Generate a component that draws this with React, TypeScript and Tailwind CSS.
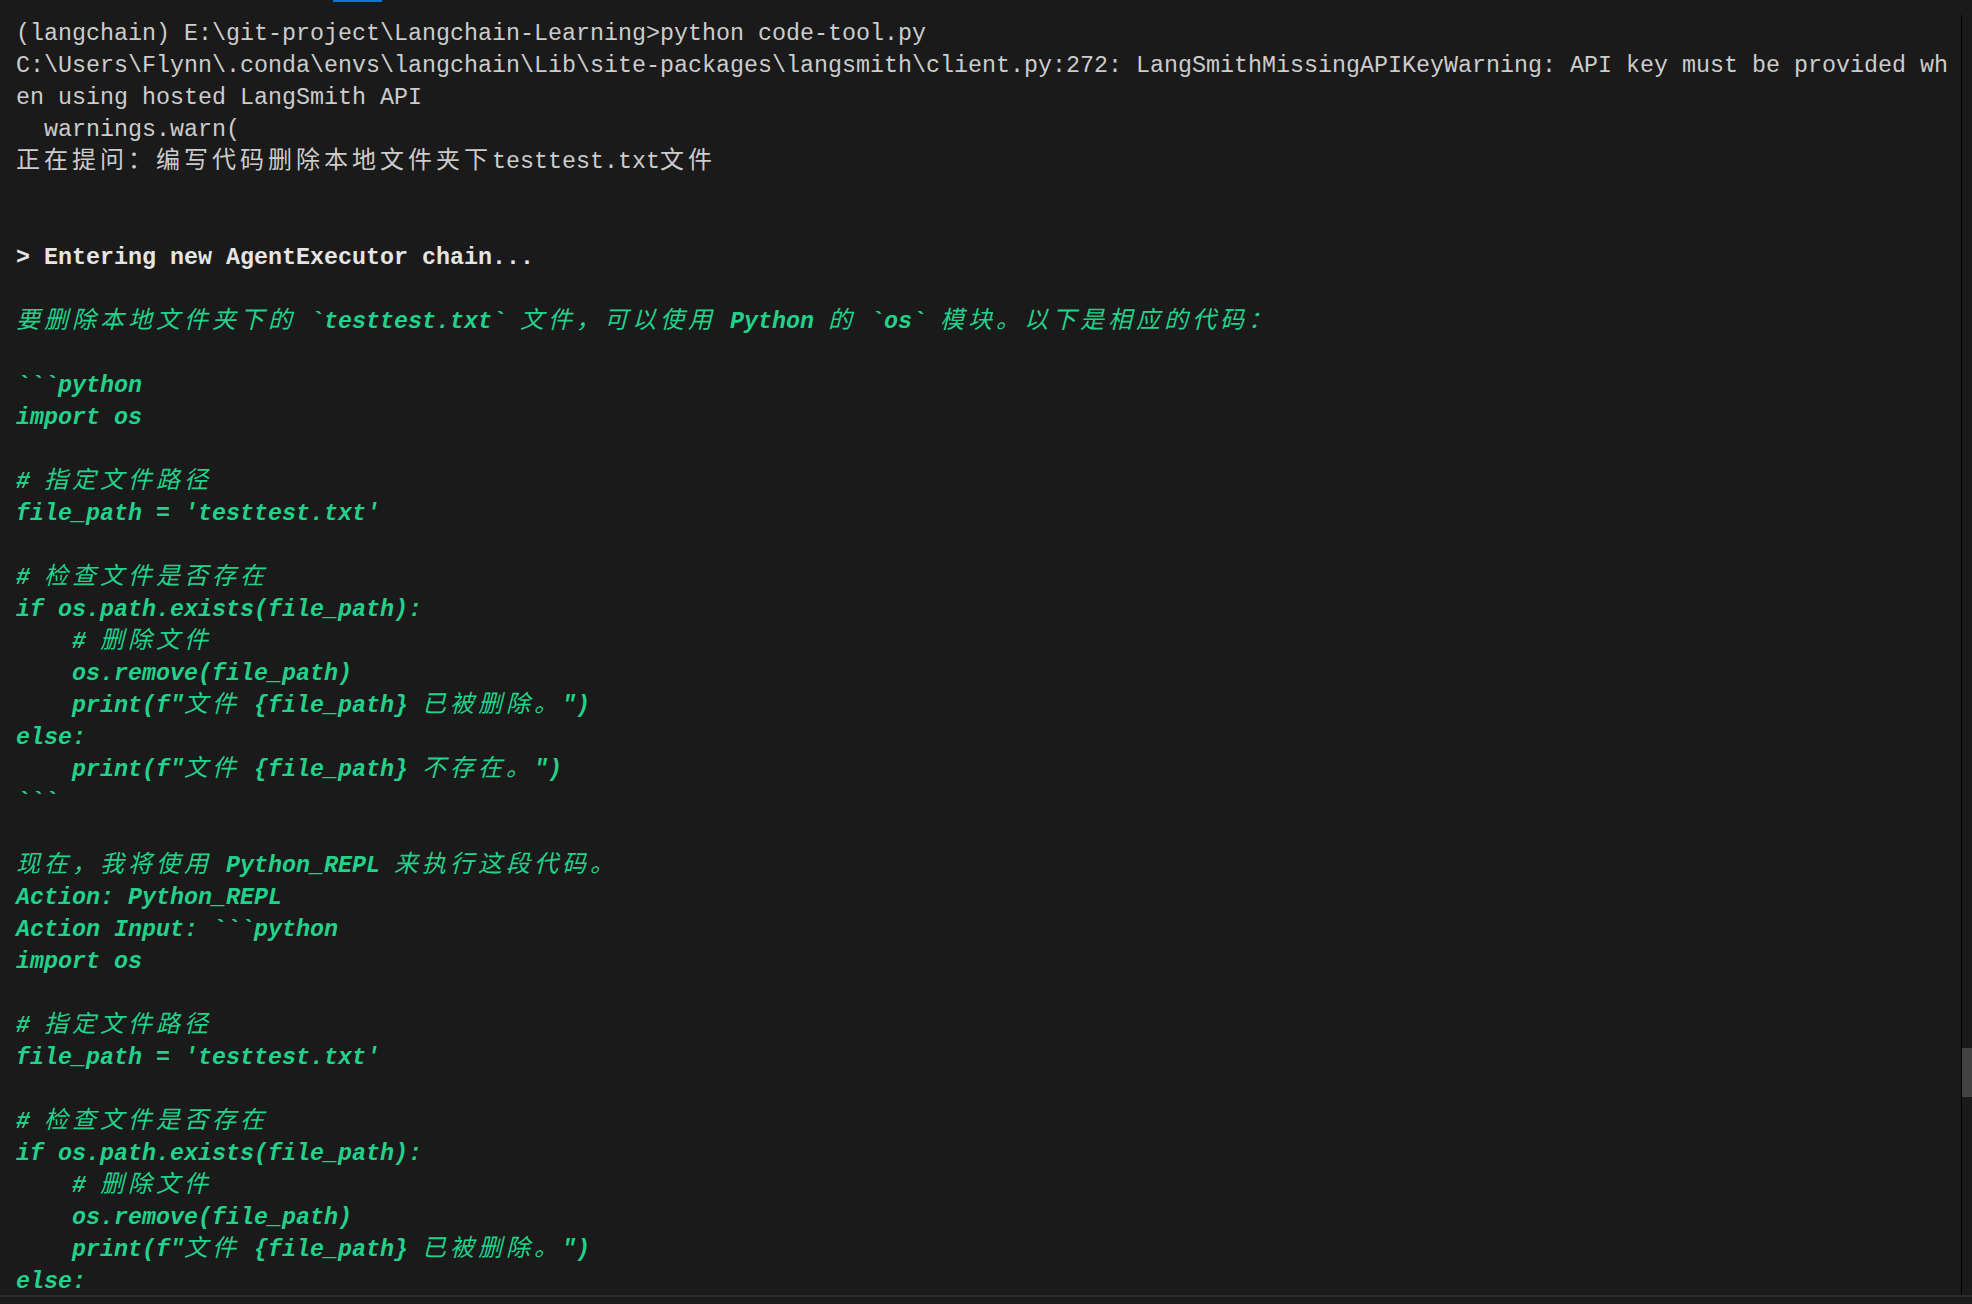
import React from 'react';

type Kind = 'plain' | 'bold' | 'green';

const lines: [string, Kind][] = [
  ['(langchain) E:\\git-project\\Langchain-Learning>python code-tool.py', 'plain'],
  ['C:\\Users\\Flynn\\.conda\\envs\\langchain\\Lib\\site-packages\\langsmith\\client.py:272: LangSmithMissingAPIKeyWarning: API key must be provided wh', 'plain'],
  ['en using hosted LangSmith API', 'plain'],
  ['  warnings.warn(', 'plain'],
  ['正在提问：编写代码删除本地文件夹下testtest.txt文件', 'plain'],
  ['', 'plain'],
  ['', 'plain'],
  ['> Entering new AgentExecutor chain...', 'bold'],
  ['', 'plain'],
  ['要删除本地文件夹下的 `testtest.txt` 文件，可以使用 Python 的 `os` 模块。以下是相应的代码：', 'green'],
  ['', 'plain'],
  ['```python', 'green'],
  ['import os', 'green'],
  ['', 'plain'],
  ['# 指定文件路径', 'green'],
  ["file_path = 'testtest.txt'", 'green'],
  ['', 'plain'],
  ['# 检查文件是否存在', 'green'],
  ['if os.path.exists(file_path):', 'green'],
  ['    # 删除文件', 'green'],
  ['    os.remove(file_path)', 'green'],
  ['    print(f"文件 {file_path} 已被删除。")', 'green'],
  ['else:', 'green'],
  ['    print(f"文件 {file_path} 不存在。")', 'green'],
  ['```', 'green'],
  ['', 'plain'],
  ['现在，我将使用 Python_REPL 来执行这段代码。', 'green'],
  ['Action: Python_REPL', 'green'],
  ['Action Input: ```python', 'green'],
  ['import os', 'green'],
  ['', 'plain'],
  ['# 指定文件路径', 'green'],
  ["file_path = 'testtest.txt'", 'green'],
  ['', 'plain'],
  ['# 检查文件是否存在', 'green'],
  ['if os.path.exists(file_path):', 'green'],
  ['    # 删除文件', 'green'],
  ['    os.remove(file_path)', 'green'],
  ['    print(f"文件 {file_path} 已被删除。")', 'green'],
  ['else:', 'green'],
];

// CJK and full-width punctuation take two terminal cells
const WIDE = /([\u3000-\u303f\u3400-\u9fff\uff00-\uffef]+)/;

const kindClass: Record<Kind, string> = {
  plain: 'text-[#cccccc]',
  bold: 'font-bold text-[#e5e5e5]',
  green: 'font-bold italic text-[#23d18b]',
};

const Run = ({ text }: { text: string }) => {
  const parts = text.split(WIDE);
  return (
    <>
      {parts.map((p, i) =>
        i % 2 === 1 ? (
          <span
            key={i}
            className="font-['Noto_Sans_CJK_SC',sans-serif] text-[24px] font-normal leading-[20px] tracking-[4px]"
          >
            {p}
          </span>
        ) : (
          <React.Fragment key={i}>{p}</React.Fragment>
        )
      )}
    </>
  );
};

const App = () => {
  return (
    <div className="flex h-[1304px] w-[1972px] flex-col overflow-hidden bg-[#1a1a1a] font-['Liberation_Mono',monospace] text-[23.33px]">
      {/* tab focus indicator */}
      <div className="h-[2px] pl-[333px]">
        <div className="h-full w-[49px] bg-[#0078d4]" />
      </div>

      <div className="flex h-[1293px]">
        {/* Terminal output */}
        <div className="flex-1 overflow-hidden pl-[16px] pt-[16px]">
          {lines.map(([text, kind], i) => (
            <div key={i} className={`h-[32px] whitespace-pre leading-[32px] ${kindClass[kind]}`}>
              <Run text={text} />
            </div>
          ))}
        </div>

        {/* Scrollbar */}
        <div className="mt-[13px] w-[11px] border-l border-black">
          <div className="mt-[1033px] h-[49px] bg-[#424242]" />
        </div>
      </div>

      <div className="h-[2px] bg-[#2b2b2b]" />
      <div className="flex-1" />
    </div>
  );
};

export default App;
